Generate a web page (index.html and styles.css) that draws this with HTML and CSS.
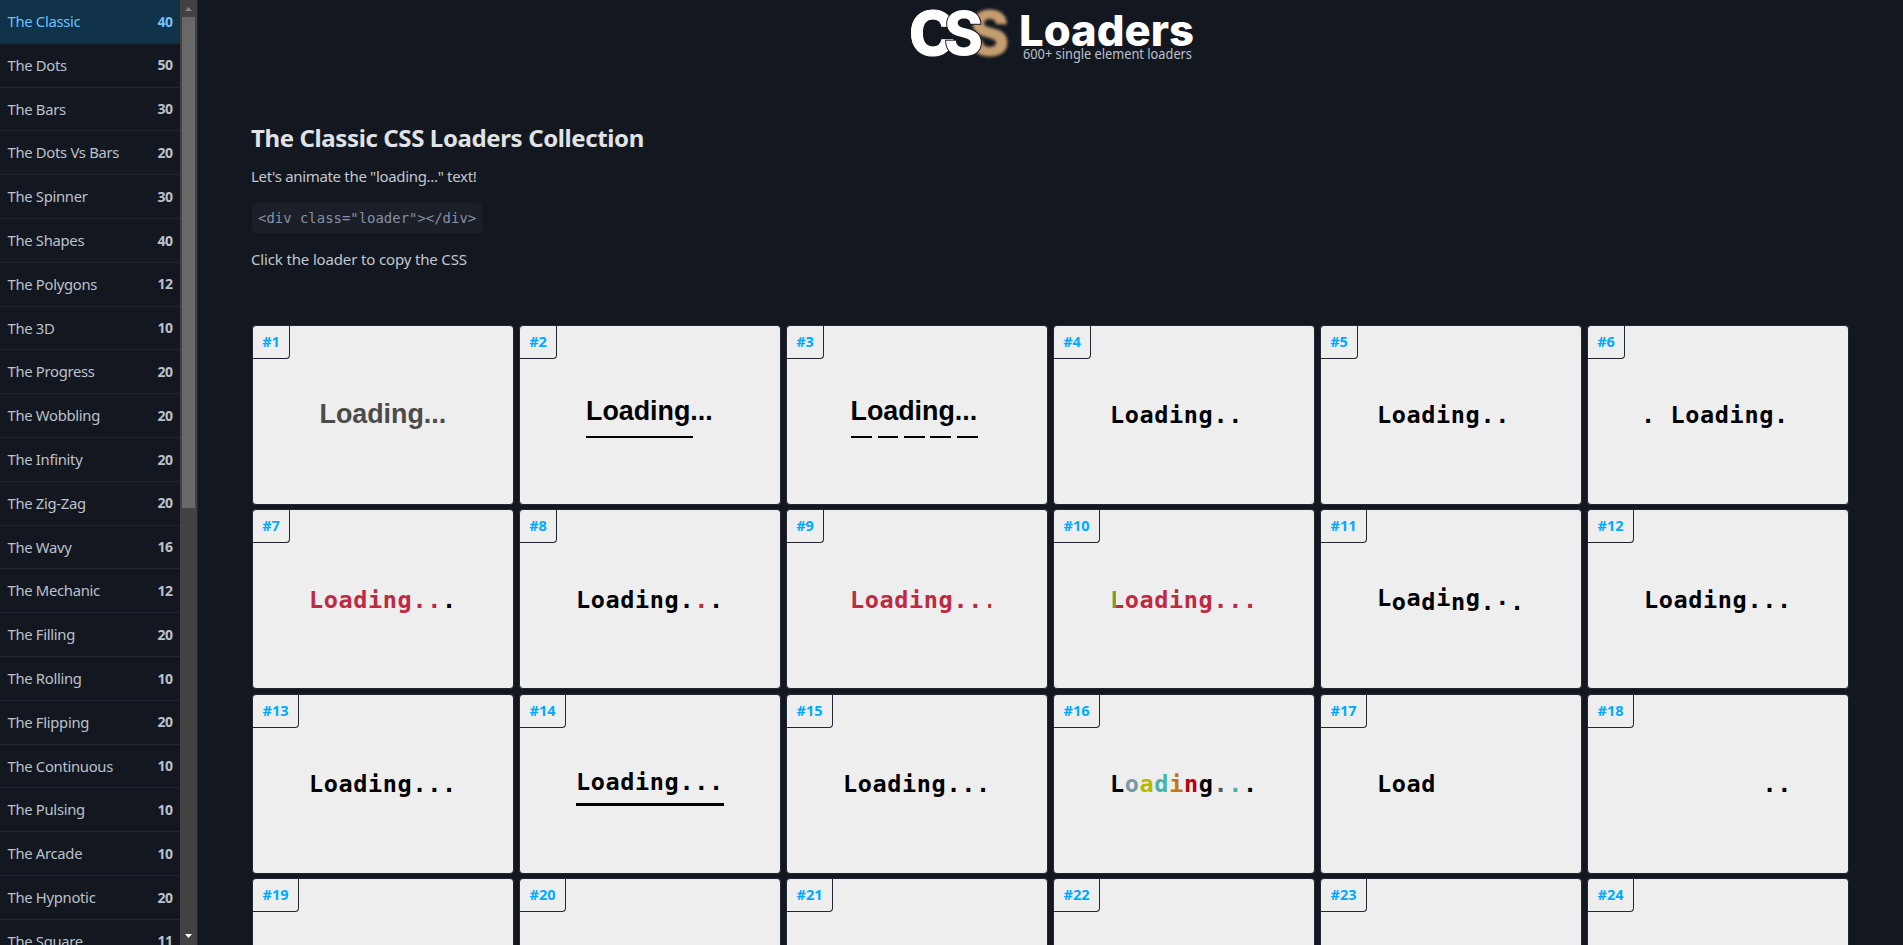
FILE: index.html
```
<!DOCTYPE html>
<html lang="en">
<head>
<meta charset="utf-8">
<title>The Classic CSS Loaders Collection</title>
<link rel="stylesheet" href="styles.css">
</head>
<body>
<aside class="sidebar">
  <nav class="menu">
    <a class="item active"><span>The Classic</span><b>40</b></a>
    <a class="item"><span>The Dots</span><b>50</b></a>
    <a class="item"><span>The Bars</span><b>30</b></a>
    <a class="item"><span>The Dots Vs Bars</span><b>20</b></a>
    <a class="item"><span>The Spinner</span><b>30</b></a>
    <a class="item"><span>The Shapes</span><b>40</b></a>
    <a class="item"><span>The Polygons</span><b>12</b></a>
    <a class="item"><span>The 3D</span><b>10</b></a>
    <a class="item"><span>The Progress</span><b>20</b></a>
    <a class="item"><span>The Wobbling</span><b>20</b></a>
    <a class="item"><span>The Infinity</span><b>20</b></a>
    <a class="item"><span>The Zig-Zag</span><b>20</b></a>
    <a class="item"><span>The Wavy</span><b>16</b></a>
    <a class="item"><span>The Mechanic</span><b>12</b></a>
    <a class="item"><span>The Filling</span><b>20</b></a>
    <a class="item"><span>The Rolling</span><b>10</b></a>
    <a class="item"><span>The Flipping</span><b>20</b></a>
    <a class="item"><span>The Continuous</span><b>10</b></a>
    <a class="item"><span>The Pulsing</span><b>10</b></a>
    <a class="item"><span>The Arcade</span><b>10</b></a>
    <a class="item"><span>The Hypnotic</span><b>20</b></a>
    <a class="item"><span>The Square</span><b>11</b></a>
  </nav>
  <div class="scrollbar">
    <svg class="arrow" width="17" height="17" viewBox="0 0 17 17"><path d="M5 11h7L8.500 7z" fill="#868686"/></svg>
    <div class="thumb"></div>
    <svg class="arrow" width="17" height="17" viewBox="0 0 17 17"><path d="M5 6h7L8.500 10z" fill="#fff"/></svg>
  </div>
</aside>
<main class="page">
  <header class="logo">
    <svg width="290" height="64" viewBox="0 0 290 64">
      <defs><filter id="soft" x="-20%" y="-20%" width="140%" height="140%"><feGaussianBlur stdDeviation="1.5"/></filter></defs>
      <text class="mark tan" x="63" y="55" textLength="39" lengthAdjust="spacingAndGlyphs" filter="url(#soft)">S</text>
      <text class="mark" x="2" y="55" textLength="46" lengthAdjust="spacingAndGlyphs">C</text>
      <text class="mark cut" x="37" y="55" textLength="39" lengthAdjust="spacingAndGlyphs">S</text>
      <text class="word" x="112" y="46" textLength="175" lengthAdjust="spacingAndGlyphs">Loaders</text>
      <text class="tag" x="116" y="59" textLength="169" lengthAdjust="spacingAndGlyphs">600+ single element loaders</text>
    </svg>
  </header>
  <section class="intro">
    <h1>The Classic CSS Loaders Collection</h1>
    <p class="lead">Let's animate the "loading..." text!</p>
    <code>&lt;div class="loader"&gt;&lt;/div&gt;</code>
    <p class="hint">Click the loader to copy the CSS</p>
  </section>
  <section class="grid">
    <article class="card"><b class="num">#1</b><div class="sans fade">Loading...</div></article>
    <article class="card"><b class="num">#2</b><div class="sans line">Loading...</div></article>
    <article class="card"><b class="num">#3</b><div class="sans dashes">Loading...</div></article>
    <article class="card"><b class="num">#4</b><div class="mono">Loading..</div></article>
    <article class="card"><b class="num">#5</b><div class="mono">Loading..</div></article>
    <article class="card"><b class="num">#6</b><div class="mono slide">. Loading.</div></article>

    <article class="card"><b class="num">#7</b><div class="mono"><span class="red">Loading..</span>.</div></article>
    <article class="card"><b class="num">#8</b><div class="mono">Loading.<span class="red">.</span>.</div></article>
    <article class="card"><b class="num">#9</b><div class="mono red clip">Loading...</div></article>
    <article class="card"><b class="num wide">#10</b><div class="mono red"><span class="split">L</span>oading...</div></article>
    <article class="card"><b class="num wide">#11</b><div class="mono wave"><i>L</i><i>o</i><i>a</i><i>d</i><i>i</i><i>n</i><i>g</i><i>.</i><i>.</i><i>.</i></div></article>
    <article class="card"><b class="num wide">#12</b><div class="mono">Loading...</div></article>

    <article class="card"><b class="num wide">#13</b><div class="mono">Loading...</div></article>
    <article class="card"><b class="num wide">#14</b><div class="mono underline">Loading...</div></article>
    <article class="card"><b class="num wide">#15</b><div class="mono">Loading...</div></article>
    <article class="card"><b class="num wide">#16</b><div class="mono">L<span class="slate">o</span><span class="olive">a</span><span class="teal">d</span><span class="orange">i</span><span class="crimson">n</span>g<span class="gray">.</span><span class="teal">.</span>.</div></article>
    <article class="card"><b class="num wide">#17</b><div class="mono">Load</div></article>
    <article class="card"><b class="num wide">#18</b><div class="mono end">..</div></article>

    <article class="card"><b class="num wide">#19</b></article>
    <article class="card"><b class="num wide">#20</b></article>
    <article class="card"><b class="num wide">#21</b></article>
    <article class="card"><b class="num wide">#22</b></article>
    <article class="card"><b class="num wide">#23</b></article>
    <article class="card"><b class="num wide">#24</b></article>
  </section>
</main>
</body>
</html>
```
FILE: styles.css
```
* { box-sizing: border-box; }
body {
  margin: 0;
  height: 945px;
  overflow: hidden;
  display: flex;
  background: #13171f;
  color: #c3c8d0;
  font-family: "Noto Sans", sans-serif;
  font-size: 15px;
}

/* sidebar */
.sidebar {
  width: 198px;
  height: 945px;
  flex: none;
  display: flex;
  overflow: hidden;
  border-right: 1px solid #202632;
}
.menu { width: 180px; flex: none; }
.item {
  height: 43.8px;
  padding: 0 7.500px 0.600px 7.500px;
  display: flex;
  align-items: center;
  justify-content: space-between;
  border-bottom: 1px solid #202632;
  color: #bbc1cc;
  font-size: 14.800px;
  letter-spacing: -0.3px;
  white-space: nowrap;
}
.item b { font-size: 14px; letter-spacing: -0.5px; }
.active { background: #103349; color: #72bfff; }
.scrollbar {
  width: 17px;
  display: flex;
  flex-direction: column;
  align-items: center;
  justify-content: space-between;
  background: #424242;
}
.arrow { flex: none; display: block; }
.thumb { width: 13px; height: 491px; margin-bottom: auto; background: #686868; }

/* main column */
.page { flex: 1; height: 945px; overflow: hidden; padding-left: 54px; }
.logo { height: 120px; padding-left: 655px; }
.logo svg { display: block; }
.mark { font: 800 60px Inter, sans-serif; fill: #fff; stroke: #fff; stroke-width: 1px; }
.tan { fill: #c49d70; stroke: #c49d70; }
.cut { stroke: #13171f; stroke-width: 2px; paint-order: stroke; }
.word { font: 800 43px Inter, sans-serif; fill: #fff; }
.tag { font: 14px "Noto Sans", sans-serif; fill: #bbc1cc; }

.intro { height: 204.900px; display: flex; flex-direction: column; align-items: flex-start; }
h1 {
  margin: 0 0 0 -1px;
  font-size: 24px;
  line-height: 35px;
  letter-spacing: -0.38px;
  color: #e0e3e7;
}
p { margin: 0 0 0 -1px; line-height: 22px; letter-spacing: -0.2px; }
.lead { margin-top: 10px; letter-spacing: -0.32px; }
.hint { letter-spacing: -0.15px; }
code {
  height: 30px;
  margin: 16px 0 15px;
  padding: 0 6px;
  border-radius: 4px;
  background: #1a1f28;
  color: #8891a4;
  font: 13.950px/30px "DejaVu Sans Mono", monospace;
}

/* cards */
.grid {
  width: 1597px;
  display: grid;
  grid-template-columns: repeat(6, 262px);
  grid-auto-rows: 180px;
  gap: 4.5px 5px;
}
.card {
  position: relative;
  display: flex;
  align-items: center;
  justify-content: center;
  border: 1px solid #202632;
  border-radius: 4px;
  background: #eee;
  color: #000;
}
.num {
  position: absolute;
  top: 0;
  left: 0;
  width: 37px;
  height: 33px;
  border: solid #202632;
  border-width: 0 1px 1px 0;
  border-radius: 0 0 4px 0;
  color: #0af;
  font-size: 14.5px;
  line-height: 30px;
  text-align: center;
}
.wide { width: 46px; }

/* loaders */
.sans { width: 127px; font: bold 26.850px/31px "Liberation Sans", Arial, sans-serif; white-space: nowrap; }
.fade { color: #4b4b4b; }
.line, .dashes { padding: 4px 0 11px; background: linear-gradient(#000 0 0) 0 100%/107px 2px no-repeat; }
.line { margin-right: 1px; }
.dashes {
  margin-right: 6px;
  background: repeating-linear-gradient(90deg, #000 0 21px, transparent 21px 26.500px) 0 100%/100% 2px no-repeat;
}
.mono {
  width: 148px;
  padding-top: 2px;
  font: bold 23.500px/31px "DejaVu Sans Mono", monospace;
  letter-spacing: 0.620px;
  white-space: pre;
}
.red { color: #c02942; }
.slide { transform: translateX(-3px); }
.clip { padding-left: 7px; overflow: hidden; }
.split { background: linear-gradient(90deg, #8c9c10 6px, #c02942 6px); background-clip: text; color: transparent; }
.wave i { display: inline-block; font-style: normal; transform: translateY(-2px); }
.wave i:nth-child(even) { transform: translateY(2px); }
.wave i:nth-child(9) { transform: translateY(-3px); }
.underline { padding: 5px 0; border-bottom: 3px solid #000; }
.slate { color: #7a9aa5; }
.olive { color: #b8b800; }
.teal { color: #45b5aa; }
.orange { color: #bd7a12; }
.crimson { color: #b80010; }
.gray { color: #555b62; }
.end { text-align: right; }
```
